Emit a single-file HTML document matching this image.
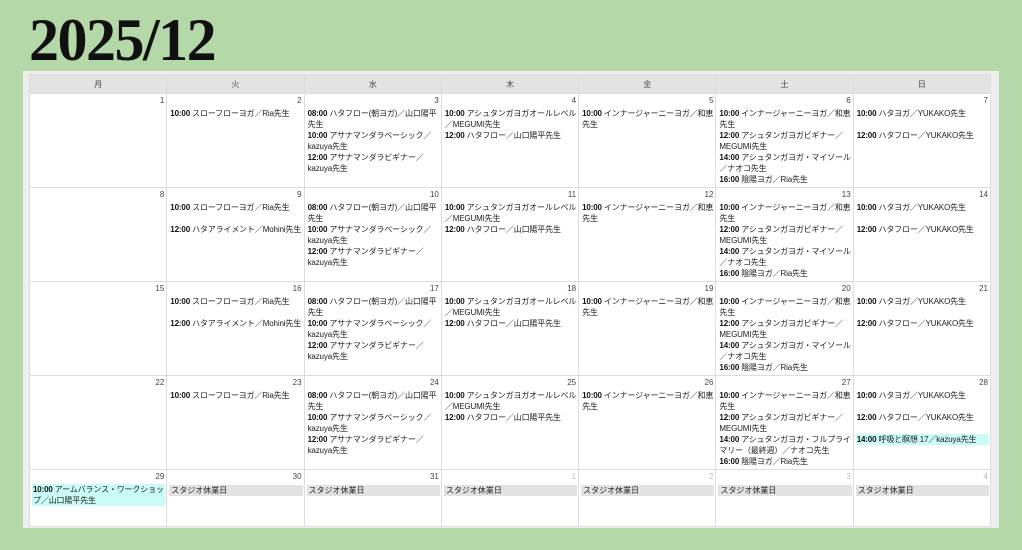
<!DOCTYPE html>
<html><head><meta charset="utf-8"><style>
*{margin:0;padding:0;box-sizing:border-box}
body{width:1022px;height:550px;background:#b5d8a8;position:relative;overflow:hidden;font-family:"Liberation Sans","Noto Sans CJK JP",sans-serif;color:#222}
h1{position:absolute;left:29px;top:10px;font-family:"Liberation Serif","Noto Serif CJK SC",serif;font-size:60px;font-weight:bold;line-height:60px;color:#111;letter-spacing:-1.5px}
.panel{position:absolute;left:23px;top:71px;width:976px;height:457px;background:#eeeeee}
table{position:absolute;left:6px;top:3px;width:962px;border-collapse:collapse;table-layout:fixed;background:#fff}
th{height:19px;background:#e3e3e3;font-size:8px;font-weight:normal;color:#444;border:1px solid #ddd}
td{vertical-align:top;border:1px solid #ddd;height:94px;font-size:8px;padding:0 1px 0 2px}
tr.last td{height:57px}
.n{text-align:right;height:14px;line-height:14px;color:#444;padding-right:1px}
.n.g{color:#bbb}
.e{line-height:11px;min-height:22px;padding-left:1px;letter-spacing:-0.15px}
.e.s{min-height:11px}
.e b{font-weight:bold;color:#111}
.c{background:#c9fbf7}
.h{background:#e2e2e2;line-height:11px;padding-left:2px;margin:1px 0}
</style></head><body>
<h1>2025/12</h1>
<div class="panel">
<table>
<tr><th>月</th><th>火</th><th>水</th><th>木</th><th>金</th><th>土</th><th>日</th></tr>
<tr>
<td><div class="n">1</div></td>
<td><div class="n">2</div><div class="e"><b>10:00</b> スローフローヨガ／Ria先生</div></td>
<td><div class="n">3</div><div class="e"><b>08:00</b> ハタフロー(朝ヨガ)／山口陽平先生</div><div class="e"><b>10:00</b> アサナマンダラベーシック／kazuya先生</div><div class="e"><b>12:00</b> アサナマンダラビギナー／kazuya先生</div></td>
<td><div class="n">4</div><div class="e"><b>10:00</b> アシュタンガヨガオールレベル／MEGUMI先生</div><div class="e"><b>12:00</b> ハタフロー／山口陽平先生</div></td>
<td><div class="n">5</div><div class="e"><b>10:00</b> インナージャーニーヨガ／和恵先生</div></td>
<td><div class="n">6</div><div class="e"><b>10:00</b> インナージャーニーヨガ／和恵先生</div><div class="e"><b>12:00</b> アシュタンガヨガビギナー／MEGUMI先生</div><div class="e"><b>14:00</b> アシュタンガヨガ・マイソール／ナオコ先生</div><div class="e s"><b>16:00</b> 陰陽ヨガ／Ria先生</div></td>
<td><div class="n">7</div><div class="e"><b>10:00</b> ハタヨガ／YUKAKO先生</div><div class="e"><b>12:00</b> ハタフロー／YUKAKO先生</div></td>
</tr>
<tr>
<td><div class="n">8</div></td>
<td><div class="n">9</div><div class="e"><b>10:00</b> スローフローヨガ／Ria先生</div><div class="e"><b>12:00</b> ハタアライメント／Mohini先生</div></td>
<td><div class="n">10</div><div class="e"><b>08:00</b> ハタフロー(朝ヨガ)／山口陽平先生</div><div class="e"><b>10:00</b> アサナマンダラベーシック／kazuya先生</div><div class="e"><b>12:00</b> アサナマンダラビギナー／kazuya先生</div></td>
<td><div class="n">11</div><div class="e"><b>10:00</b> アシュタンガヨガオールレベル／MEGUMI先生</div><div class="e"><b>12:00</b> ハタフロー／山口陽平先生</div></td>
<td><div class="n">12</div><div class="e"><b>10:00</b> インナージャーニーヨガ／和恵先生</div></td>
<td><div class="n">13</div><div class="e"><b>10:00</b> インナージャーニーヨガ／和恵先生</div><div class="e"><b>12:00</b> アシュタンガヨガビギナー／MEGUMI先生</div><div class="e"><b>14:00</b> アシュタンガヨガ・マイソール／ナオコ先生</div><div class="e s"><b>16:00</b> 陰陽ヨガ／Ria先生</div></td>
<td><div class="n">14</div><div class="e"><b>10:00</b> ハタヨガ／YUKAKO先生</div><div class="e"><b>12:00</b> ハタフロー／YUKAKO先生</div></td>
</tr>
<tr>
<td><div class="n">15</div></td>
<td><div class="n">16</div><div class="e"><b>10:00</b> スローフローヨガ／Ria先生</div><div class="e"><b>12:00</b> ハタアライメント／Mohini先生</div></td>
<td><div class="n">17</div><div class="e"><b>08:00</b> ハタフロー(朝ヨガ)／山口陽平先生</div><div class="e"><b>10:00</b> アサナマンダラベーシック／kazuya先生</div><div class="e"><b>12:00</b> アサナマンダラビギナー／kazuya先生</div></td>
<td><div class="n">18</div><div class="e"><b>10:00</b> アシュタンガヨガオールレベル／MEGUMI先生</div><div class="e"><b>12:00</b> ハタフロー／山口陽平先生</div></td>
<td><div class="n">19</div><div class="e"><b>10:00</b> インナージャーニーヨガ／和恵先生</div></td>
<td><div class="n">20</div><div class="e"><b>10:00</b> インナージャーニーヨガ／和恵先生</div><div class="e"><b>12:00</b> アシュタンガヨガビギナー／MEGUMI先生</div><div class="e"><b>14:00</b> アシュタンガヨガ・マイソール／ナオコ先生</div><div class="e s"><b>16:00</b> 陰陽ヨガ／Ria先生</div></td>
<td><div class="n">21</div><div class="e"><b>10:00</b> ハタヨガ／YUKAKO先生</div><div class="e"><b>12:00</b> ハタフロー／YUKAKO先生</div></td>
</tr>
<tr>
<td><div class="n">22</div></td>
<td><div class="n">23</div><div class="e"><b>10:00</b> スローフローヨガ／Ria先生</div></td>
<td><div class="n">24</div><div class="e"><b>08:00</b> ハタフロー(朝ヨガ)／山口陽平先生</div><div class="e"><b>10:00</b> アサナマンダラベーシック／kazuya先生</div><div class="e"><b>12:00</b> アサナマンダラビギナー／kazuya先生</div></td>
<td><div class="n">25</div><div class="e"><b>10:00</b> アシュタンガヨガオールレベル／MEGUMI先生</div><div class="e"><b>12:00</b> ハタフロー／山口陽平先生</div></td>
<td><div class="n">26</div><div class="e"><b>10:00</b> インナージャーニーヨガ／和恵先生</div></td>
<td><div class="n">27</div><div class="e"><b>10:00</b> インナージャーニーヨガ／和恵先生</div><div class="e"><b>12:00</b> アシュタンガヨガビギナー／MEGUMI先生</div><div class="e"><b>14:00</b> アシュタンガヨガ・フルプライマリー（最終週）／ナオコ先生</div><div class="e s"><b>16:00</b> 陰陽ヨガ／Ria先生</div></td>
<td><div class="n">28</div><div class="e"><b>10:00</b> ハタヨガ／YUKAKO先生</div><div class="e"><b>12:00</b> ハタフロー／YUKAKO先生</div><div class="e s c"><b>14:00</b> 呼吸と瞑想 17／kazuya先生</div></td>
</tr>
<tr class="last">
<td><div class="n">29</div><div class="e c"><b>10:00</b> アームバランス・ワークショップ／山口陽平先生</div></td>
<td><div class="n">30</div><div class="h">スタジオ休業日</div></td>
<td><div class="n">31</div><div class="h">スタジオ休業日</div></td>
<td><div class="n g">1</div><div class="h">スタジオ休業日</div></td>
<td><div class="n g">2</div><div class="h">スタジオ休業日</div></td>
<td><div class="n g">3</div><div class="h">スタジオ休業日</div></td>
<td><div class="n g">4</div><div class="h">スタジオ休業日</div></td>
</tr>
</table>
</div>
</body></html>
